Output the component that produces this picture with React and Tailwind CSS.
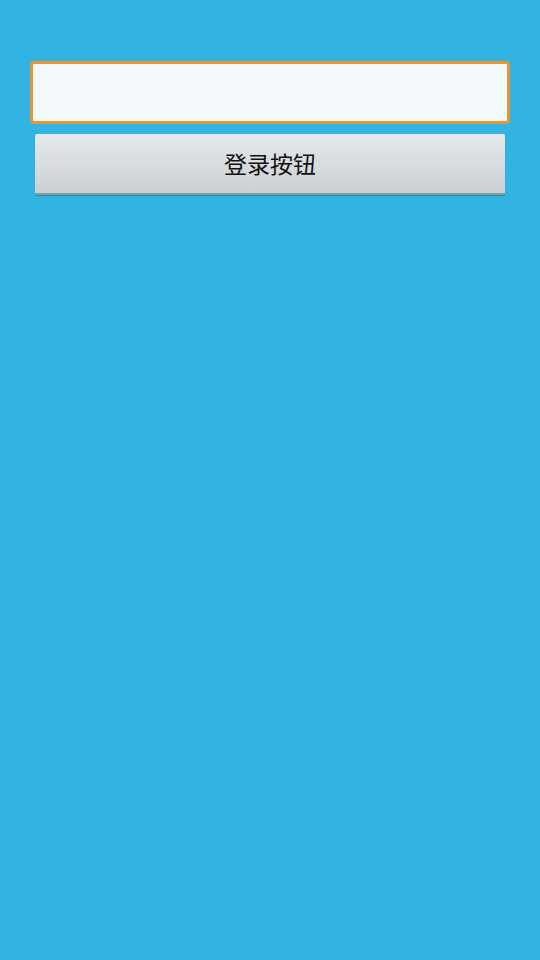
import React from 'react';

export default function App() {
  return (
    <main className="min-h-[960px] w-full bg-[#31b4e2] px-[30px] pt-[61px]" style={{ fontFamily: '"Noto Sans CJK SC", "DejaVu Sans", sans-serif' }}>
      {/* Input */}
      <input
        type="text"
        className="block h-[63px] w-full rounded-[4px] border-[3px] border-[#ea9535] bg-[#f3f9fb] px-3 text-lg outline-none"
      />
      {/* Login button */}
      <div className="mt-[10px] px-[5px]">
        <button className="flex h-[61px] w-full items-center justify-center rounded-[2px] border-b-2 border-[#8a9ba3] bg-gradient-to-b from-[#e5e9eb] to-[#cbd0d2] text-[23px] text-[#111] shadow-[0_1px_1px_rgba(0,0,0,0.25)]">
          登录按钮
        </button>
      </div>
    </main>
  );
}
